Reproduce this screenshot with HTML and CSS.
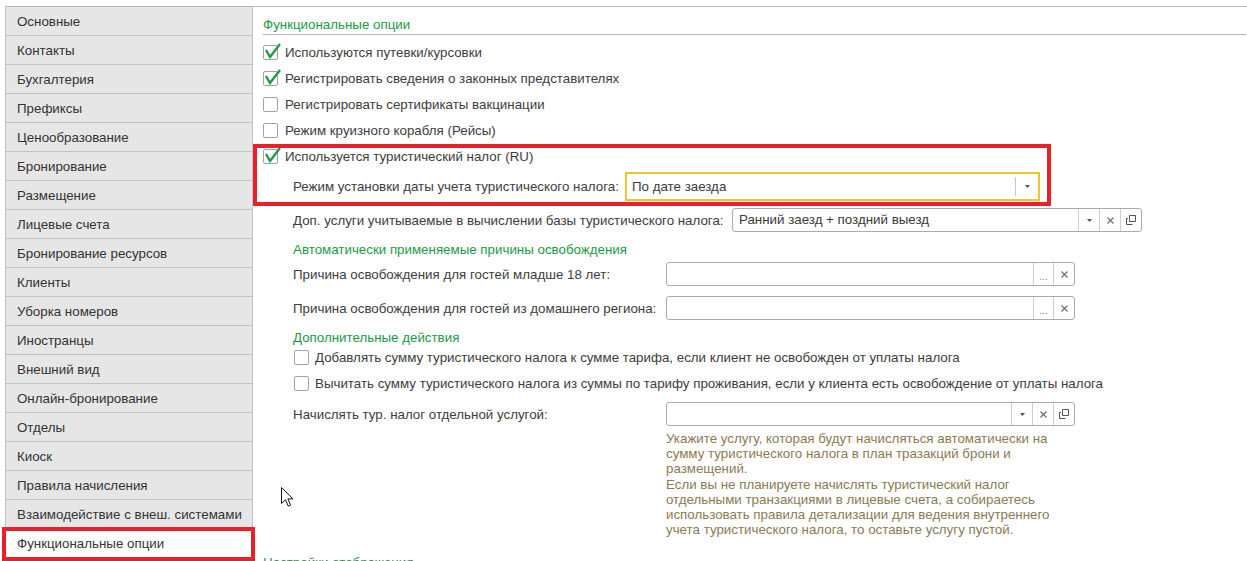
FILE: index.html
```html
<!DOCTYPE html>
<html lang="ru">
<head>
    <meta charset="UTF-8">
    <meta name="viewport" content="width=device-width, initial-scale=1.0">
    <title>Функциональные опции</title>
    <link rel="stylesheet" href="styles.css">
</head>
<body>
    <div class="form">
        <nav class="tabs">
            <div class="tab">Основные</div>
            <div class="tab">Контакты</div>
            <div class="tab">Бухгалтерия</div>
            <div class="tab">Префиксы</div>
            <div class="tab">Ценообразование</div>
            <div class="tab">Бронирование</div>
            <div class="tab">Размещение</div>
            <div class="tab">Лицевые счета</div>
            <div class="tab">Бронирование ресурсов</div>
            <div class="tab">Клиенты</div>
            <div class="tab">Уборка номеров</div>
            <div class="tab">Иностранцы</div>
            <div class="tab">Внешний вид</div>
            <div class="tab">Онлайн-бронирование</div>
            <div class="tab">Отделы</div>
            <div class="tab">Киоск</div>
            <div class="tab">Правила начисления</div>
            <div class="tab">Взаимодействие с внеш. системами</div>
            <div class="tab tab-active">Функциональные опции</div>
        </nav>

        <main class="content">
            <div class="group-title">Функциональные опции</div>

            <div class="checks">
                <div class="check">
                    <span class="box"><svg class="tick" viewBox="0 0 18 16" width="18" height="16"><path d="M2 7 L6 14 L16 1"/></svg></span>
                    Используются путевки/курсовки
                </div>
                <div class="check">
                    <span class="box"><svg class="tick" viewBox="0 0 18 16" width="18" height="16"><path d="M2 7 L6 14 L16 1"/></svg></span>
                    Регистрировать сведения о законных представителях
                </div>
                <div class="check">
                    <span class="box"></span>
                    Регистрировать сертификаты вакцинации
                </div>
                <div class="check">
                    <span class="box"></span>
                    Режим круизного корабля (Рейсы)
                </div>
            </div>

            <div class="highlight">
                <div class="check">
                    <span class="box"><svg class="tick" viewBox="0 0 18 16" width="18" height="16"><path d="M2 7 L6 14 L16 1"/></svg></span>
                    Используется туристический налог (RU)
                </div>
                <div class="field field-mode">
                    <span class="field-label label-mode">Режим установки даты учета туристического налога:</span>
                    <div class="input input-focus input-mode">
                        <span class="input-text">По дате заезда</span>
                        <span class="btn btn-focus"><svg viewBox="0 0 5 3" width="5" height="3"><path d="M0 0h5L2.5 3z" fill="#555"/></svg></span>
                    </div>
                </div>
            </div>

            <div class="indent">
                <div class="field">
                    <span class="field-label label-extra">Доп. услуги учитываемые в вычислении базы туристического налога:</span>
                    <div class="input input-extra">
                        <span class="input-text">Ранний заезд + поздний выезд</span>
                        <span class="btn"><svg viewBox="0 0 5 3" width="5" height="3"><path d="M0 0h5L2.5 3z" fill="#555"/></svg></span>
                        <span class="btn"><svg class="cross" viewBox="0 0 7 7" width="7" height="7"><path d="M0.5 0.5L6.5 6.5M6.5 0.5L0.5 6.5"/></svg></span>
                        <span class="btn"><svg class="open" viewBox="0 0 10 10" width="10" height="10"><path d="M3.5 0.5h6v6h-6z M0.5 3.5v6h6 M0.5 3.5h1.5"/></svg></span>
                    </div>
                </div>

                <div class="subtitle">Автоматически применяемые причины освобождения</div>

                <div class="field">
                    <span class="field-label label-grid">Причина освобождения для гостей младше 18 лет:</span>
                    <div class="input input-std">
                        <span class="input-text"></span>
                        <span class="btn btn-dots">...</span>
                        <span class="btn"><svg class="cross" viewBox="0 0 7 7" width="7" height="7"><path d="M0.5 0.5L6.5 6.5M6.5 0.5L0.5 6.5"/></svg></span>
                    </div>
                </div>
                <div class="field">
                    <span class="field-label label-grid">Причина освобождения для гостей из домашнего региона:</span>
                    <div class="input input-std">
                        <span class="input-text"></span>
                        <span class="btn btn-dots">...</span>
                        <span class="btn"><svg class="cross" viewBox="0 0 7 7" width="7" height="7"><path d="M0.5 0.5L6.5 6.5M6.5 0.5L0.5 6.5"/></svg></span>
                    </div>
                </div>

                <div class="subtitle subtitle-actions">Дополнительные действия</div>

                <div class="check">
                    <span class="box"></span>
                    Добавлять сумму туристического налога к сумме тарифа, если клиент не освобожден от уплаты налога
                </div>
                <div class="check">
                    <span class="box"></span>
                    Вычитать сумму туристического налога из суммы по тарифу проживания, если у клиента есть освобождение от уплаты налога
                </div>

                <div class="field field-service">
                    <span class="field-label label-grid">Начислять тур. налог отдельной услугой:</span>
                    <div class="input input-std">
                        <span class="input-text"></span>
                        <span class="btn"><svg viewBox="0 0 5 3" width="5" height="3"><path d="M0 0h5L2.5 3z" fill="#555"/></svg></span>
                        <span class="btn"><svg class="cross" viewBox="0 0 7 7" width="7" height="7"><path d="M0.5 0.5L6.5 6.5M6.5 0.5L0.5 6.5"/></svg></span>
                        <span class="btn"><svg class="open" viewBox="0 0 10 10" width="10" height="10"><path d="M3.5 0.5h6v6h-6z M0.5 3.5v6h6 M0.5 3.5h1.5"/></svg></span>
                    </div>
                </div>

                <p class="hint">
                    Укажите услугу, которая будут начисляться автоматически на<br>
                    сумму туристического налога в план тразакций брони и<br>
                    размещений.<br>
                    Если вы не планируете начислять туристический налог<br>
                    отдельными транзакциями в лицевые счета, а собираетесь<br>
                    использовать правила детализации для ведения внутреннего<br>
                    учета туристического налога, то оставьте услугу пустой.
                </p>
            </div>

            <div class="group-title group-title-next">Настройки отображения</div>
        </main>
    </div>

    <svg class="cursor" viewBox="0 0 13 20" width="13" height="20"><path d="M0.5 0.5V16.5L4.5 12.8L7.3 19.2L9.6 18.2L6.9 11.9H12Z" fill="#fff" stroke="#111" stroke-width="1"/></svg>
</body>
</html>
```

FILE: styles.css
```css
body {
    margin: 0;
    padding: 0;
    font-family: 'Liberation Sans', Arial, sans-serif;
    font-size: 13.33px;
    color: #3d3d3d;
    background: #ffffff;
    overflow: hidden;
}

.form {
    display: flex;
    margin-top: 6px;
    margin-left: 5px;
    border-top: 1px solid #b9b9b9;
    height: 560px;
}

/* left tabs */
.tabs {
    width: 248px;
    flex: none;
    border-left: 1px solid #c2c2c2;
    border-right: 1px solid #c2c2c2;
    box-sizing: border-box;
}

.tab {
    height: 28px;
    line-height: 30px;
    padding-left: 11px;
    background: #e6e6e6;
    border-bottom: 1px solid #c2c2c2;
    color: #333;
    white-space: nowrap;
    overflow: hidden;
}

.tab-active {
    position: relative;
    overflow: visible;
    background: #ffffff;
}

.tab-active::after {
    content: "";
    position: absolute;
    left: -4px;
    top: -2px;
    width: 253px;
    height: 34px;
    border: 4px solid #e8202a;
    box-sizing: border-box;
}

/* content */
.content {
    flex: 1;
    padding-left: 10px;
    padding-right: 1px;
}

.group-title {
    color: #1b9a45;
    padding-top: 10px;
    padding-bottom: 2px;
    line-height: 15px;
    border-bottom: 1px solid #b5b5b5;
}

.group-title-next {
    margin-top: 18px;
    padding-top: 0;
}

.checks {
    margin-top: 4px;
}

.check {
    display: flex;
    align-items: center;
    height: 26px;
    gap: 7px;
    white-space: nowrap;
}

.box {
    position: relative;
    width: 13px;
    height: 13px;
    flex: none;
    border: 1px solid #a3a3a3;
    border-radius: 2px;
    background: #fff;
}

.tick {
    position: absolute;
    left: 0;
    top: -3px;
    fill: none;
    stroke: #1e9b47;
    stroke-width: 2.4;
}

.highlight {
    position: relative;
}

.highlight::before {
    content: "";
    position: absolute;
    left: -10px;
    top: 1px;
    width: 798px;
    bottom: -3px;
    border: 4px solid #e8202a;
    box-sizing: border-box;
    pointer-events: none;
}

.field {
    display: flex;
    align-items: center;
    height: 34px;
    padding-left: 30px;
    white-space: nowrap;
}

.field-label {
    flex: none;
}

.label-mode {
    width: 332px;
}

.label-extra {
    width: 439px;
}

.label-grid {
    width: 373px;
}

.input {
    display: flex;
    height: 24px;
    box-sizing: border-box;
    border: 1px solid #ababab;
    border-radius: 3px;
    background: #fff;
}

.input-mode {
    width: 415px;
    height: 29px;
}

.input-focus {
    border: 2px solid #f4c22b;
    border-radius: 1px;
}

.input-extra {
    width: 410px;
}

.input-std {
    width: 409px;
}

.input-text {
    flex: 1;
    padding-left: 6px;
    line-height: 22px;
    color: #3a3a3a;
}

.input-focus .input-text {
    padding-left: 5px;
    line-height: 25px;
}

.btn {
    width: 20px;
    flex: none;
    border-left: 1px solid #cdcdcd;
    display: flex;
    align-items: center;
    justify-content: center;
}

.btn-focus {
    width: 22px;
    margin: 3px 0;
    border-left-color: #c8c8c8;
}

.btn-dots {
    align-items: flex-end;
    padding-bottom: 3px;
    box-sizing: border-box;
    font-size: 10px;
    line-height: 10px;
    color: #777;
}

.cross {
    fill: none;
    stroke: #6a6a6a;
    stroke-width: 1.1;
}

.open {
    fill: none;
    stroke: #555;
    stroke-width: 1;
}

.subtitle {
    color: #1b9a45;
    padding-left: 30px;
    margin-top: 5px;
    line-height: 15px;
}

.subtitle-actions {
    margin-top: 6px;
    line-height: 13px;
}

.indent .check {
    padding-left: 31px;
    gap: 6px;
}

.field-service {
    margin-top: 1px;
}

.hint {
    margin: 0;
    padding-left: 403px;
    line-height: 15.2px;
    color: #8a7b50;
    white-space: nowrap;
}

.cursor {
    position: absolute;
    left: 281px;
    top: 487px;
}
```
